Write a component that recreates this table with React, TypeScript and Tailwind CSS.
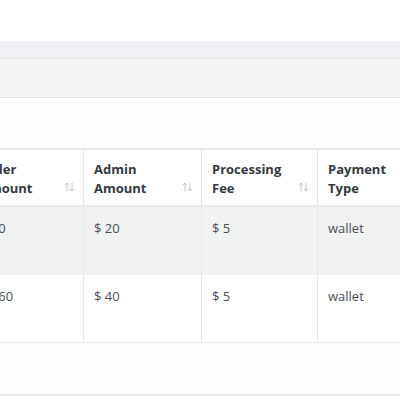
import React from 'react';

type Row = { seller: string; admin: string; fee: string; type: string; bg: string; h: string };

const rows: Row[] = [
  { seller: '$ 80', admin: '$ 20', fee: '$ 5', type: 'wallet', bg: 'bg-[#f0f1f1]', h: 'h-[68px]' },
  { seller: '$ 160', admin: '$ 40', fee: '$ 5', type: 'wallet', bg: 'bg-white', h: 'h-[67px]' },
];

function SortIcon() {
  return (
    <svg width="11" height="10" viewBox="0 0 11 10" className="absolute right-[8px] bottom-[13px]" fill="none" stroke="#c3c7cd" strokeWidth="1">
      <path d="M3 9.5V1M0.8 3.2L3 1l2.2 2.2" />
      <path d="M8 0.5V9M5.8 6.8L8 9l2.2-2.2" />
    </svg>
  );
}

function HeadCell({ children, sortable, last }: { children: React.ReactNode; sortable?: boolean; last?: boolean }) {
  return (
    <div className={`relative px-[10px] pt-[10px] text-[13px] font-bold leading-[19px] text-[#343a40] ${last ? '' : 'border-r border-[#e6e7ea]'}`}>
      {children}
      {sortable && <SortIcon />}
    </div>
  );
}

export default function App() {
  return (
    <div className="w-[400px] h-[400px] overflow-hidden bg-white" style={{ fontFamily: '"Open Sans", "Noto Sans", sans-serif' }}>
      <div className="h-[41px] bg-white" />
      <div className="h-[18px] bg-[#f0f1f6] border-b border-[#e5e6ea]" />
      <div className="h-[39px] bg-[#f5f5f5] border-b border-[#e3e3e3]" />
      <div className="h-[50px] bg-[#fdfdfd]" />

      <div className="ml-[-30px] w-[460px] border-t-2 border-[#e8e9ec]">
        <div className="grid grid-cols-[114px_118px_116px_1fr] h-[57px] bg-white border-b-2 border-[#e8e9ec]">
          <HeadCell sortable>Seller<br />Amount</HeadCell>
          <HeadCell sortable>Admin<br />Amount</HeadCell>
          <HeadCell sortable>Processing<br />Fee</HeadCell>
          <HeadCell last>Payment<br />Type</HeadCell>
        </div>
        {rows.map((r, i) => (
          <div key={i} className={`grid grid-cols-[114px_118px_116px_1fr] ${r.h} ${r.bg} text-[13px] leading-[19px] text-[#4a4f55]`}>
            <div className="px-[10px] pt-[12px] border-r border-[#e6e7ea]">{r.seller}</div>
            <div className="px-[10px] pt-[12px] border-r border-[#e6e7ea]">{r.admin}</div>
            <div className="px-[10px] pt-[12px] border-r border-[#e6e7ea]">{r.fee}</div>
            <div className="px-[10px] pt-[12px]">{r.type}</div>
          </div>
        ))}
        <div className="border-t border-[#e8e9ec]" />
      </div>

      <div className="h-[53px] bg-[#fdfdfd] border-b-2 border-[#ebecef]" />
    </div>
  );
}
